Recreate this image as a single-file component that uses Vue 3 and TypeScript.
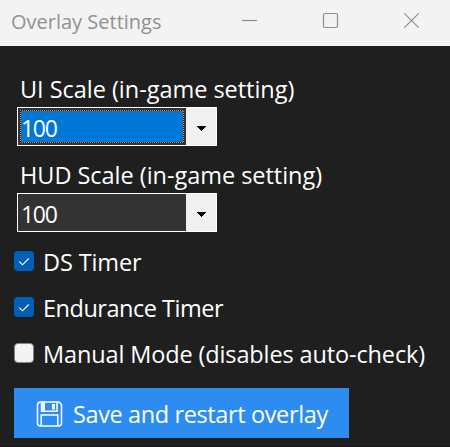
<script setup lang="ts">
import { ref } from 'vue'

interface ScaleField {
  id: string
  label: string
  value: string
  focused: boolean
}

interface Option {
  id: string
  label: string
  checked: boolean
}

const scales = ref<ScaleField[]>([
  { id: 'ui', label: 'UI Scale (in-game setting)', value: '100', focused: true },
  { id: 'hud', label: 'HUD Scale (in-game setting)', value: '100', focused: false },
])

const options = ref<Option[]>([
  { id: 'ds', label: 'DS Timer', checked: true },
  { id: 'endurance', label: 'Endurance Timer', checked: true },
  { id: 'manual', label: 'Manual Mode (disables auto-check)', checked: false },
])
</script>

<template>
  <div class="window">
    <header class="titlebar">
      <span class="title">Overlay Settings</span>
      <div class="controls">
        <svg class="control" viewBox="0 0 81 46"><path d="M17 20.5h15" /></svg>
        <svg class="control" viewBox="0 0 81 46"><rect x="17.5" y="13.5" width="14" height="14" rx="1.5" /></svg>
        <svg class="control" viewBox="0 0 81 46"><path d="M17.3 13.3l14.4 14.4M31.7 13.3L17.3 27.7" /></svg>
      </div>
    </header>

    <main class="content">
      <section v-for="field in scales" :key="field.id" class="field">
        <label class="label" :class="field.id">{{ field.label }}</label>
        <div class="combo">
          <div class="value" :class="{ focused: field.focused }">
            <span class="number">{{ field.value }}</span>
            <svg v-if="field.focused" class="focus" viewBox="0 0 164 33">
              <rect class="under" x="0.5" y="0.5" width="163" height="32" />
              <rect class="dots" x="0.5" y="0.5" width="163" height="32" />
            </svg>
          </div>
          <div class="arrow">
            <svg viewBox="0 0 9 5" shape-rendering="crispEdges"><path d="M0 0h9v1H8v1H7v1H6v1H5v1H4V4H3V3H2V2H1V1H0z" /></svg>
          </div>
        </div>
      </section>

      <div class="options">
        <div v-for="option in options" :key="option.id" class="option" @click="option.checked = !option.checked">
          <span class="box" :class="{ checked: option.checked }">
            <svg v-if="option.checked" viewBox="0 0 20 20"><path d="M5.3 10.6l3.2 3.2 6.2-6.3" /></svg>
          </span>
          <span class="text" :class="option.id">{{ option.label }}</span>
        </div>
      </div>

      <button class="save" type="button">
        <svg class="disk" viewBox="0 0 26 26">
          <path class="outline" d="M4 1h18.5L25 3.5V22a3 3 0 0 1-3 3H4a3 3 0 0 1-3-3V4a3 3 0 0 1 3-3z" />
          <path class="outline" d="M5 1.5v8.8h15.5V1.5M4.7 25V14h16.6v11" />
          <path class="fill" d="M4.5 1.5h4v8h-4zM15.5 3h3v5.5h-3z" />
        </svg>
        <span class="caption">Save and restart overlay</span>
      </button>
    </main>
  </div>
</template>

<style>
body {
  margin: 0;
  background: #1f1f1f;
}
</style>

<style scoped>
.window {
  box-sizing: border-box;
  width: 450px;
  height: 447px;
  overflow: hidden;
  border-bottom: 1px solid #171216;
  background: #1f1f1f;
  color: #fff;
  font-family: "Open Sans", "Noto Sans", sans-serif;
  font-size: 23.5px;
  white-space: nowrap;
}

.titlebar {
  display: flex;
  justify-content: space-between;
  height: 46px;
  padding-left: 11px;
  background: #f3f3f3;
  color: #919191;
}

.title {
  font-size: 20px;
  line-height: 43px;
}

.controls {
  display: flex;
  margin-right: -18px;
}

.control {
  width: 81px;
  height: 46px;
  fill: none;
  stroke: #8e8e8e;
  stroke-width: 1.2;
}

.content {
  display: flex;
  flex-direction: column;
  align-items: flex-start;
  padding: 25px 14px 0;
}

.field {
  margin: 0 0 11px 3px;
}

.label {
  display: block;
  height: 36px;
  padding-left: 3px;
  line-height: 36px;
  letter-spacing: -0.03px;
}

.combo {
  display: flex;
  box-sizing: border-box;
  width: 200px;
  height: 39px;
  border: 1px solid #fff;
  background: #333;
}

.value {
  position: relative;
  box-sizing: border-box;
  width: 164px;
  height: 33px;
  margin: 2px;
  padding-left: 1px;
  font-size: 23px;
  line-height: 36px;
  letter-spacing: -1.3px;
}

.value.focused {
  background: #0078d7;
}

.focus {
  position: absolute;
  inset: 0;
  width: 164px;
  height: 33px;
  fill: none;
}

.under {
  stroke: #1a1a1a;
}

.dots {
  stroke: #ff8728;
  stroke-dasharray: 1 1;
  stroke-dashoffset: 0.5;
}

.arrow {
  display: flex;
  align-items: center;
  justify-content: center;
  flex: 1;
  background: #f0f0f0;
}

.arrow svg {
  width: 9px;
  height: 5px;
  margin-top: 3px;
}

.options {
  margin-top: -5px;
}

.option {
  display: flex;
  align-items: center;
  height: 46px;
}

.box {
  box-sizing: border-box;
  width: 20px;
  height: 20px;
  margin-right: 9px;
  border: 1px solid #858585;
  border-radius: 4px;
  background: #f3f3f3;
}

.box.checked {
  border: 0;
  background: #005fb8;
}

.box svg {
  display: block;
  width: 20px;
  height: 20px;
  fill: none;
  stroke: #fff;
  stroke-width: 1.1;
}

.text {
  padding-top: 2px;
  line-height: 44px;
}

.text.ds {
  letter-spacing: -0.12px;
}

.text.endurance {
  letter-spacing: -0.48px;
}

.text.manual {
  letter-spacing: -0.13px;
}

.save {
  display: flex;
  align-items: center;
  width: 335px;
  height: 50px;
  margin-top: 12px;
  padding: 0 0 0 22px;
  border: 0;
  background: #2d8cf0;
  color: #fff;
  font: inherit;
}

.disk {
  width: 27px;
  height: 26px;
  margin-top: 2px;
}

.outline {
  fill: none;
  stroke: #fff;
  stroke-width: 1.5;
}

.fill {
  fill: #fff;
}

.caption {
  padding: 2px 0 0 10px;
  line-height: 49px;
  letter-spacing: -0.38px;
}
</style>
